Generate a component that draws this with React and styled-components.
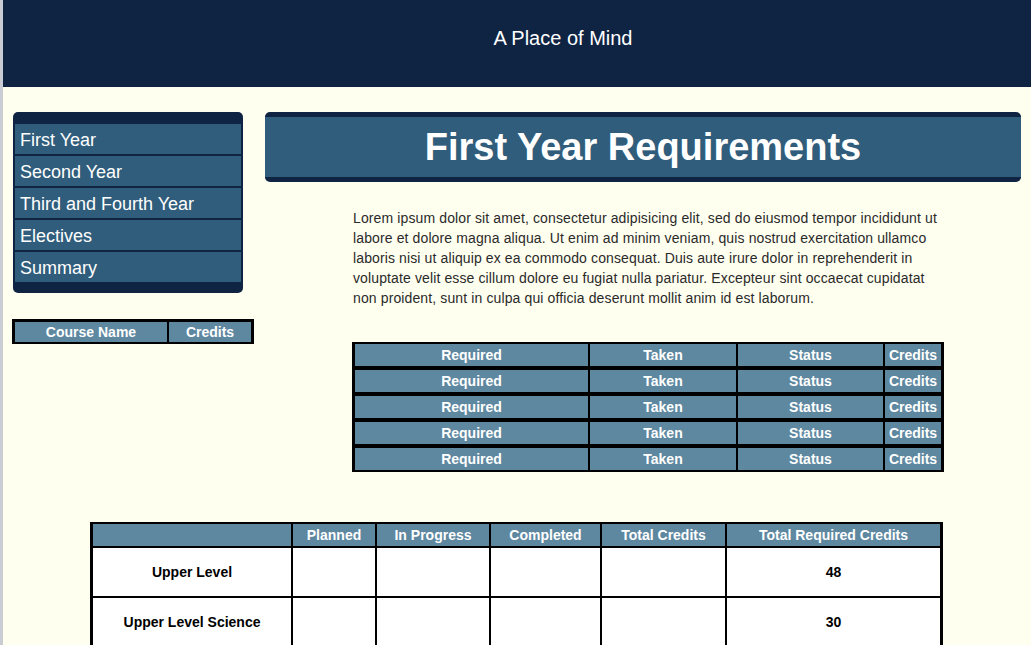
import React from 'react'
import styled, { createGlobalStyle } from 'styled-components'

const GlobalStyle = createGlobalStyle`
  body {
    margin: 0;
    background-color: #fffff0;
    font-family: "Liberation Sans", Arial, Helvetica, sans-serif;
  }
`

const Page = styled.div`
  border-left: 3px solid #c9ccd3;
  min-height: 100vh;
  box-sizing: border-box;
`

const Header = styled.header`
  height: 87px;
  background-color: #0f2343;
  display: flex;
  align-items: center;
  justify-content: center;
  padding-left: 92px;
  padding-bottom: 11px;
  box-sizing: border-box;
  color: #fff;
  font-size: 20px;
`

const Top = styled.div`
  display: flex;
  align-items: flex-start;
  padding-top: 25px;
`

const Sidebar = styled.aside`
  margin-left: 9px;
  width: 242px;
`

const Nav = styled.ul`
  list-style: none;
  margin: 0 0 0 1px;
  width: 230px;
  box-sizing: border-box;
  padding: 12px 2px 11px;
  background-color: #0f2343;
  border-radius: 5px;
  display: flex;
  flex-direction: column;
  gap: 2px;
`

const NavItem = styled.li`
  height: 30px;
  line-height: 32px;
  padding-left: 5px;
  background-color: #305d7b;
  color: #fff;
  font-size: 18px;
`

const CourseTable = styled.table`
  margin-top: 26px;
  background-color: #000;
  border-spacing: 2px;
  padding: 1px 1px 0;
`

const HeadCell = styled.th`
  width: ${p => p.w}px;
  padding: 0;
  background-color: #5e87a0;
  color: #fff;
  font-size: 14px;
  font-weight: bold;
  line-height: ${p => p.lh || 22}px;
  text-align: center;
  white-space: nowrap;
`

const Main = styled.main`
  margin-left: 11px;
  width: 756px;
`

const Banner = styled.div`
  height: 70px;
  box-sizing: border-box;
  border-top: 5px solid #0f2343;
  border-bottom: 5px solid #0f2343;
  border-radius: 5px;
  background-color: #305d7b;
  display: flex;
  align-items: center;
  justify-content: center;
`

const Title = styled.h1`
  margin: 0;
  color: #fff;
  font-size: 38px;
  font-weight: bold;
`

const Text = styled.p`
  margin: 26px 0 0 88px;
  width: 590px;
  font-size: 14px;
  line-height: 20px;
  letter-spacing: 0.12px;
  color: #2a2a2a;
`

const ReqTable = styled.table`
  margin: 34px 0 0 87px;
  background-color: #000;
  border-spacing: 2px 0;
  padding: 0 1px;
`

const ReqCell = styled.td`
  width: ${p => p.w}px;
  padding: 0;
  border-top: 2px solid #000;
  border-bottom: 2px solid #000;
  background-color: #5e87a0;
  color: #fff;
  font-size: 14px;
  font-weight: bold;
  line-height: 22px;
  text-align: center;
  white-space: nowrap;
`

const SummaryTable = styled.table`
  margin: 50px 0 0 87px;
  background-color: #000;
  border-spacing: 2px;
  padding: 0 1px;
`

const BodyCell = styled.td`
  height: 48px;
  padding: 0;
  background-color: #fff;
  color: #000;
  font-size: 14px;
  font-weight: bold;
  text-align: center;
  vertical-align: middle;
`

const navItems = ['First Year', 'Second Year', 'Third and Fourth Year', 'Electives', 'Summary']

const reqCols = [
  ['Required', 233],
  ['Taken', 146],
  ['Status', 145],
  ['Credits', 56],
]

const summaryCols = [
  ['', 198],
  ['Planned', 82],
  ['In Progress', 112],
  ['Completed', 109],
  ['Total Credits', 123],
  ['Total Required Credits', 213],
]

const summaryRows = [
  ['Upper Level', 48],
  ['Upper Level Science', 30],
]

const App = () => (
  <Page>
    <GlobalStyle />
    <Header>A Place of Mind</Header>
    <Top>
      <Sidebar>
        <Nav>
          {navItems.map(item => (
            <NavItem key={item}>{item}</NavItem>
          ))}
        </Nav>
        <CourseTable>
          <thead>
            <tr>
              <HeadCell w={152} lh={20}>Course Name</HeadCell>
              <HeadCell w={82} lh={20}>Credits</HeadCell>
            </tr>
          </thead>
        </CourseTable>
      </Sidebar>
      <Main>
        <Banner>
          <Title>First Year Requirements</Title>
        </Banner>
        <Text>
          Lorem ipsum dolor sit amet, consectetur adipisicing elit, sed do eiusmod tempor
          incididunt ut labore et dolore magna aliqua. Ut enim ad minim veniam, quis nostrud
          exercitation ullamco laboris nisi ut aliquip ex ea commodo consequat. Duis aute irure
          dolor in reprehenderit in voluptate velit esse cillum dolore eu fugiat nulla pariatur.
          Excepteur sint occaecat cupidatat non proident, sunt in culpa qui officia deserunt
          mollit anim id est laborum.
        </Text>
        <ReqTable>
          <tbody>
            {[0, 1, 2, 3, 4].map(i => (
              <tr key={i}>
                {reqCols.map(([label, w]) => (
                  <ReqCell key={label} w={w}>{label}</ReqCell>
                ))}
              </tr>
            ))}
          </tbody>
        </ReqTable>
      </Main>
    </Top>
    <SummaryTable>
      <thead>
        <tr>
          {summaryCols.map(([label, w]) => (
            <HeadCell key={w + label} w={w}>{label}</HeadCell>
          ))}
        </tr>
      </thead>
      <tbody>
        {summaryRows.map(([name, total]) => (
          <tr key={name}>
            <BodyCell>{name}</BodyCell>
            <BodyCell />
            <BodyCell />
            <BodyCell />
            <BodyCell />
            <BodyCell>{total}</BodyCell>
          </tr>
        ))}
      </tbody>
    </SummaryTable>
  </Page>
)

export default App
